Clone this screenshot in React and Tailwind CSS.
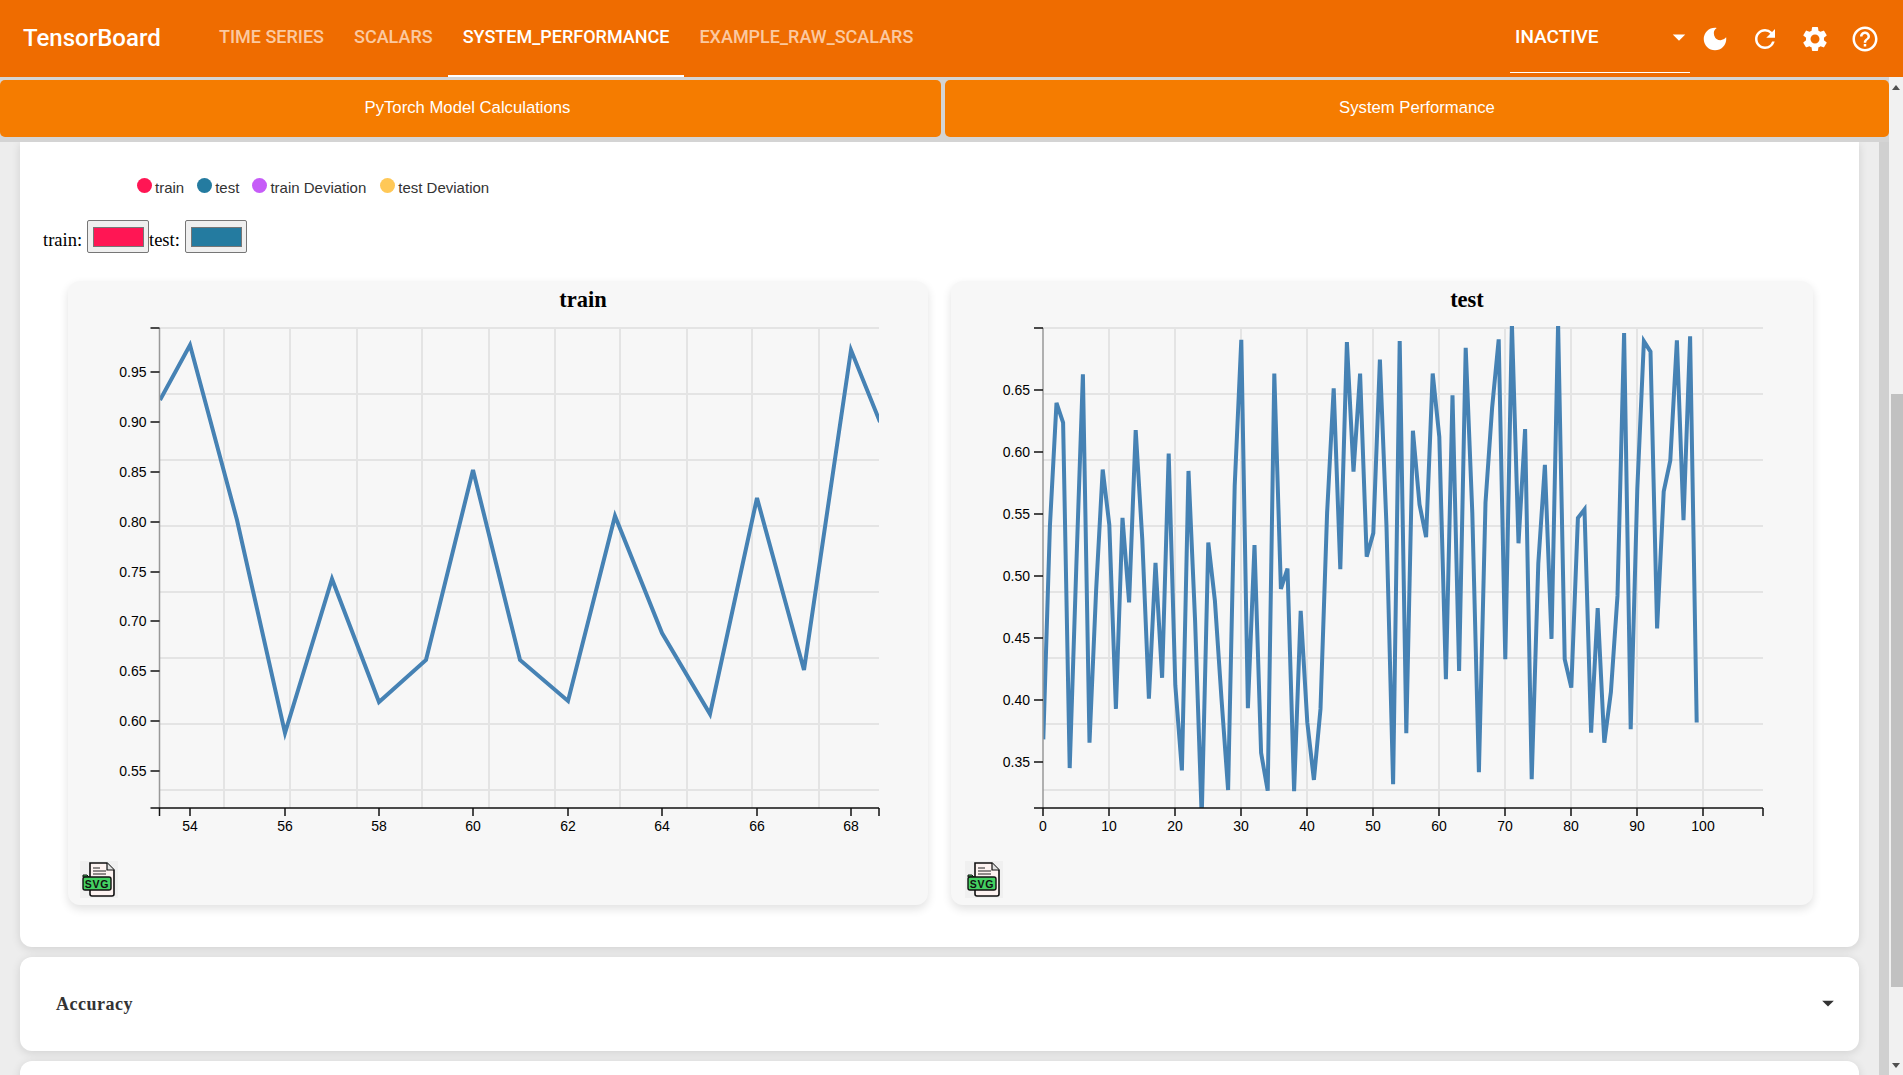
import React from "react";
import { MdDarkMode, MdRefresh, MdSettings, MdHelpOutline, MdArrowDropDown } from "react-icons/md";

const tabs = [
  { name: "TIME SERIES" },
  { name: "SCALARS" },
  { name: "SYSTEM_PERFORMANCE", active: true },
  { name: "EXAMPLE_RAW_SCALARS" },
];

const legend = [
  { name: "train", dot: "bg-[#ff1654]", ml: "ml-0" },
  { name: "test", dot: "bg-[#247ba0]", ml: "ml-[13px]" },
  { name: "train Deviation", dot: "bg-[#c65cf8]", ml: "ml-[13px]" },
  { name: "test Deviation", dot: "bg-[#ffc857]", ml: "ml-[14px]" },
];

const gridRows = [328, 394, 460, 526, 592, 658, 724, 790];

const trainPoints = [
  [160, 400], [190, 345], [237, 520], [285, 733], [332, 579], [379, 702], [426, 660], [473, 470],
  [520, 660], [568, 701], [615, 516], [662, 633], [710, 714], [757, 498], [804, 670], [851, 350], [880, 422],
];

// traced from the curve, mapped to page y below
const testTrace = [
  1270, 640, 275, 333, 1355, 760, 190, 1280, 830, 472, 635, 1180, 615, 865, 355, 680, 1150, 748, 1088, 425,
  1110, 1362, 476, 920, 1500, 688, 860, 1150, 1420, 520, 88, 1178, 695, 1310, 1422, 188, 825, 765, 1423, 890,
  1220, 1390, 1180, 600, 232, 767, 95, 478, 188, 730, 660, 147, 640, 1403, 92, 1252, 357, 575, 672, 188,
  375, 1092, 252, 1068, 112, 600, 1367, 570, 290, 87, 1033, 40, 690, 352, 1388, 750, 458, 973, 40, 1033,
  1117, 615, 590, 1250, 882, 1280, 1130, 845, 68, 1240, 530, 92, 123, 942, 537, 445, 90, 622, 78, 1220,
];
const testPoints = testTrace.map((v, i) => [1043.3 + i * 6.6, 310 + v / 2.958]);

const toLine = (pts) => pts.map((p) => p.join(",")).join(" ");

function Chart({ id, title, view, x0, x1, gridCols, yTicks, xTicks, endTicks, points, iconCls }) {
  return (
    <div className="w-full h-full flex flex-col rounded-xl bg-[#f7f7f7] shadow-[0_4px_10px_rgba(0,0,0,0.12)]">
      <div className="h-[38px] pl-[170px] text-center text-[22.5px] leading-[37px] font-bold text-black font-['Liberation_Serif',serif]">{title}</div>
      <svg viewBox={view} className="block w-full h-[536px]">
        <defs>
          <clipPath id={id}>
            <rect x={x0} y="326" width={x1 - x0} height="482" />
          </clipPath>
        </defs>
        {gridRows.map((y) => (
          <line key={y} x1={x0} x2={x1} y1={y} y2={y} stroke="#e4e4e4" strokeWidth="2" />
        ))}
        {gridCols.map((x) => (
          <line key={x} x1={x} x2={x} y1="328" y2="808" stroke="#e4e4e4" strokeWidth="2" />
        ))}
        <polyline points={toLine(points)} fill="none" stroke="#4682b4" strokeWidth="4" clipPath={`url(#${id})`} />
        <line x1={x0} x2={x0} y1="328" y2="808" stroke="#999" strokeWidth="1.5" />
        <line x1={x0 - 9} x2={x0} y1="328" y2="328" stroke="#111" strokeWidth="1.5" />
        {yTicks.map(([label, y]) => (
          <g key={label}>
            <line x1={x0 - 9} x2={x0} y1={y} y2={y} stroke="#111" strokeWidth="1.5" />
            <text x={x0 - 13} y={y + 5} textAnchor="end" fontSize="14" fill="#000" fontFamily="Liberation Sans, sans-serif">{label}</text>
          </g>
        ))}
        <line x1={x0 - 9} x2={x1} y1="808" y2="808" stroke="#111" strokeWidth="1.5" />
        {endTicks.map((x) => (
          <line key={x} x1={x} x2={x} y1="808" y2="816" stroke="#111" strokeWidth="1.5" />
        ))}
        {xTicks.map(([label, x]) => (
          <g key={label}>
            <line x1={x} x2={x} y1="808" y2="816" stroke="#111" strokeWidth="1.5" />
            <text x={x} y="831" textAnchor="middle" fontSize="14" fill="#000" fontFamily="Liberation Sans, sans-serif">{label}</text>
          </g>
        ))}
      </svg>
      <div className={`pt-[6px] ${iconCls}`}>
        <SvgFileIcon />
      </div>
    </div>
  );
}

function SvgFileIcon() {
  return (
    <svg viewBox="0 0 38 37" className="block w-[38px] h-[37px] bg-[#f0f0f0]">
      <path d="M10 2h17l7 7v24a2 2 0 0 1-2 2H12a2 2 0 0 1-2-2z" fill="#fdf3f1" stroke="#111" strokeWidth="1.6" />
      <path d="M27 2v7h7" fill="#e2e2e2" stroke="#111" strokeWidth="1.2" />
      <path d="M13 7h7M13 10h13M13 13h13" stroke="#222" strokeWidth="1.2" />
      <path d="M3 14h4l2 2h-6z" fill="#3fc95a" stroke="#111" strokeWidth="1" />
      <rect x="3" y="16" width="28" height="13" rx="2" fill="#44d162" stroke="#111" strokeWidth="1.4" />
      <text x="17" y="27" textAnchor="middle" fontSize="10.5" fontWeight="700" fill="#111" letterSpacing="0.8" fontFamily="Liberation Sans, sans-serif">SVG</text>
    </svg>
  );
}

function ColorField({ color }) {
  return (
    <button className="flex items-center justify-center w-[62px] h-[33px] bg-[#efefef] border border-[#767676] rounded-[2px]">
      <span className={`block w-[51px] h-[20px] border border-[#767676] ${color}`} />
    </button>
  );
}

export default function App() {
  return (
    <div className="h-screen flex flex-col overflow-hidden bg-[#ededed] font-['Liberation_Sans',sans-serif]">
      <header className="flex items-center h-[77px] shrink-0 bg-[#ef6c00] text-white font-[Roboto,sans-serif]">
        <div className="ml-[23px] w-[181px] text-[24px] font-medium -mt-[1px]">TensorBoard</div>
        <nav className="flex h-full">
          {tabs.map((t) => (
            <div
              key={t.name}
              className={`flex items-center px-[15px] pb-[2px] text-[18px] font-medium border-b-2 ${
                t.active ? "text-white border-white" : "text-[#fbc9a0] border-transparent"
              }`}
            >
              {t.name}
            </div>
          ))}
        </nav>
        <div className="ml-auto flex items-center justify-between w-[180px] h-[73px] pl-[5px] mb-[4px] border-b border-white">
          <span className="text-[19px] font-medium mt-[3px]">INACTIVE</span>
          <MdArrowDropDown size={30} className="mr-[-4px] mt-[2px]" />
        </div>
        <div className="flex items-center ml-[10px] mr-[23px] gap-[20px]">
          <MdDarkMode size={30} />
          <MdRefresh size={30} />
          <MdSettings size={30} />
          <MdHelpOutline size={30} />
        </div>
      </header>

      <div className="flex flex-1 min-h-0">
        <div className="flex-1 flex flex-col min-w-0">
          <div className="flex gap-[4px] shrink-0 pt-[3px] pb-[5px] bg-[#d4d4d4]">
            <button className="w-[941px] h-[57px] pr-[6px] pb-[2px] rounded-[5px] bg-[#f57c00] text-white text-[16.7px]">PyTorch Model Calculations</button>
            <button className="flex-1 h-[57px] pb-[2px] rounded-[5px] bg-[#f57c00] text-white text-[16.7px]">System Performance</button>
          </div>
          <div className="flex flex-1 min-h-0">
            <main className="flex-1 min-w-0 px-[20px] overflow-hidden flex flex-col gap-[10px]">
              <section className="shrink-0 h-[805px] bg-white rounded-b-xl shadow-[0_2px_10px_rgba(0,0,0,0.12)] pl-[23px] pt-[36px]">
                <div className="flex items-center h-[16px] ml-[94px] text-[15px] text-[#333]">
                  {legend.map((l) => (
                    <div key={l.name} className={`flex items-center gap-[3px] ${l.ml}`}>
                      <span className={`block w-[15px] h-[15px] rounded-full ${l.dot} -mt-[1px]`} />
                      <span className="mt-[4px]">{l.name}</span>
                    </div>
                  ))}
                </div>
                <div className="flex items-center h-[33px] mt-[26px] text-[18.5px] leading-[20px] text-black font-['Liberation_Serif',serif]">
                  <span className="w-[44px] mt-[7px]">train:</span>
                  <ColorField color="bg-[#ff1654]" />
                  <span className="w-[36px] mt-[7px]">test:</span>
                  <ColorField color="bg-[#247ba0]" />
                </div>
                <div className="flex mt-[28px] ml-[25px] gap-[23px] h-[624px]">
                  <div className="w-[860px]">
                    <Chart
                      id="clip-train"
                      title="train"
                      view="68 319 860 536"
                      x0={159.5}
                      x1={879}
                      gridCols={[224, 290, 357, 422, 489, 555, 620, 687, 752, 819]}
                      yTicks={[["0.95", 372], ["0.90", 422], ["0.85", 472], ["0.80", 522], ["0.75", 572], ["0.70", 621], ["0.65", 671], ["0.60", 721], ["0.55", 771]]}
                      xTicks={[["54", 190], ["56", 285], ["58", 379], ["60", 473], ["62", 568], ["64", 662], ["66", 757], ["68", 851]]}
                      endTicks={[159.5, 879]}
                      points={trainPoints}
                      iconCls="pl-[12px]"
                    />
                  </div>
                  <div className="w-[862px]">
                    <Chart
                      id="clip-test"
                      title="test"
                      view="951 319 862 536"
                      x0={1043}
                      x1={1763}
                      gridCols={[1109, 1175, 1241, 1307, 1373, 1439, 1505, 1571, 1637, 1703]}
                      yTicks={[["0.65", 390], ["0.60", 452], ["0.55", 514], ["0.50", 576], ["0.45", 638], ["0.40", 700], ["0.35", 762]]}
                      xTicks={[["0", 1043], ["10", 1109], ["20", 1175], ["30", 1241], ["40", 1307], ["50", 1373], ["60", 1439], ["70", 1505], ["80", 1571], ["90", 1637], ["100", 1703]]}
                      endTicks={[1763]}
                      points={testPoints}
                      iconCls="pl-[14px]"
                    />
                  </div>
                </div>
              </section>
              <section className="shrink-0 h-[94px] flex items-center justify-between px-[36px] bg-white rounded-xl shadow-[0_2px_10px_rgba(0,0,0,0.12)]">
                <span className="text-[18px] font-bold tracking-[0.5px] text-[#333] font-['Liberation_Serif',serif]">Accuracy</span>
                <MdArrowDropDown size={28} className="text-[#333] -mr-[19px] -mt-[2px]" />
              </section>
              <section className="shrink-0 h-[94px] bg-white rounded-t-xl shadow-[0_2px_10px_rgba(0,0,0,0.12)]" />
            </main>
            <div className="w-[10px] shrink-0 bg-[#d0d0d0]" />
          </div>
        </div>

        <div className="w-[14px] shrink-0 flex flex-col items-center bg-[#f1f1f1] relative">
          <span className="absolute top-[8px] w-0 h-0 border-x-[4px] border-x-transparent border-b-[5px] border-b-[#505050]" />
          <div className="absolute top-[317px] right-0 w-[12px] h-[593px] bg-[#c1c1c1]" />
          <span className="absolute bottom-[7px] w-0 h-0 border-x-[4px] border-x-transparent border-t-[5px] border-t-[#505050]" />
        </div>
      </div>
    </div>
  );
}
